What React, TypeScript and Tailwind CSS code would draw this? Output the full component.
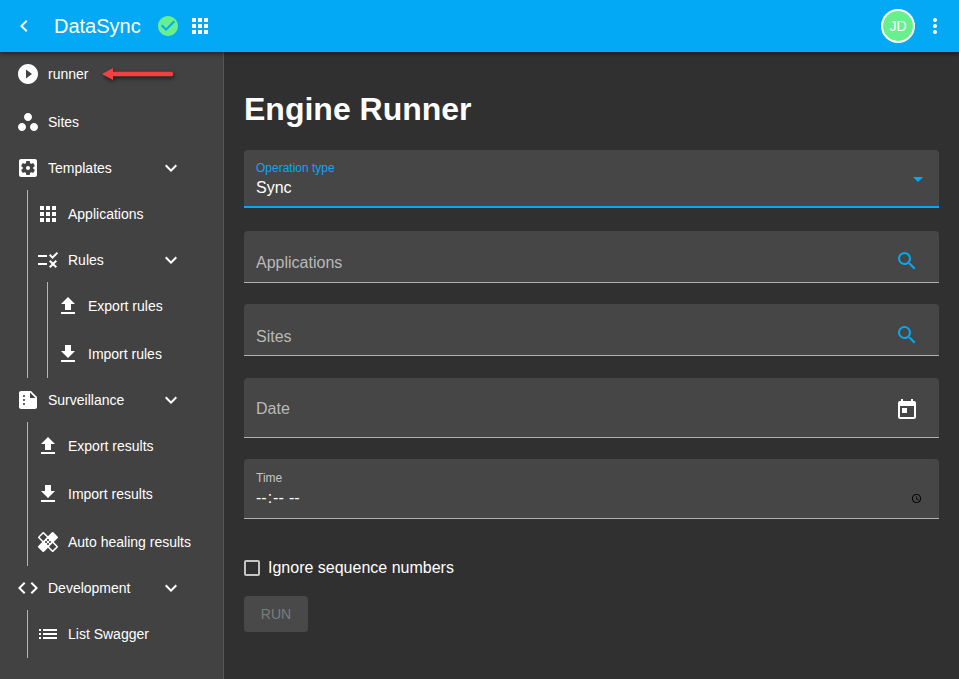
import type { ReactNode } from "react"
import {
  MdApps,
  MdArrowDropDown,
  MdCheckCircle,
  MdChevronLeft,
  MdCode,
  MdExpandMore,
  MdFileDownload,
  MdFileUpload,
  MdHealing,
  MdList,
  MdMoreVert,
  MdPlayCircleFilled,
  MdRule,
  MdSearch,
  MdSettingsApplications,
  MdSummarize,
  MdToday,
  MdWorkspaces,
} from "react-icons/md"

function NavItem({ icon, label, children }: { icon: ReactNode; label: string; children?: ReactNode }) {
  return (
    <div className="flex h-12 items-center pl-4 text-sm text-white">
      <span className="flex w-6 justify-center text-2xl">{icon}</span>
      <span className="ml-2 whitespace-nowrap">{label}</span>
      {children}
    </div>
  )
}

function NavGroup({ icon, label, children }: { icon: ReactNode; label: string; children: ReactNode }) {
  return (
    <div>
      <div className="flex h-11 items-center pl-4 text-sm text-white">
        <span className="flex w-6 justify-center text-2xl">{icon}</span>
        <span className="ml-2 whitespace-nowrap">{label}</span>
        <MdExpandMore className="ml-auto mr-10 text-2xl" />
      </div>
      <div className="ml-[27px] border-l border-[#b5b5b5] [&>*]:-ml-2">{children}</div>
    </div>
  )
}

function SearchField({ label, textClass, iconClass }: { label: string; textClass: string; iconClass: string }) {
  return (
    <div className="flex h-[52px] items-end justify-between rounded-t border-b border-[#b0b0b0] bg-[#464646] pb-[9px] pl-3 pr-5">
      <span className={"text-base leading-6 text-[#b9b9b9] " + textClass}>{label}</span>
      <MdSearch className={"text-2xl text-[#03a9f4] " + iconClass} />
    </div>
  )
}

export default function App() {
  return (
    <div className="flex h-[679px] flex-col overflow-hidden bg-[#303030] font-['Liberation_Sans',Arial,sans-serif]">
      {/* Top bar */}
      <header className="relative z-10 flex h-[52px] shrink-0 items-center bg-[#03a9f4] pl-3 pr-3 text-white shadow-[0_2px_4px_rgba(0,0,0,0.45)]">
        <MdChevronLeft className="text-2xl" />
        <span className="ml-[18px] text-xl">DataSync</span>
        <MdCheckCircle className="ml-[15px] text-2xl text-[#69f08e]" />
        <MdApps className="ml-2 text-2xl" />
        <div className="ml-auto flex h-[34px] w-[34px] items-center justify-center rounded-full border-2 border-white bg-[#69f08e] text-sm text-white">
          JD
        </div>
        <MdMoreVert className="ml-2 text-2xl" />
      </header>

      <div className="flex min-h-0 flex-1">
        {/* Sidebar */}
        <nav className="w-[224px] shrink-0 border-r border-[#565656] bg-[#424242]">
          <div className="mb-[2px] flex h-11 items-center pl-4 text-sm text-white">
            <MdPlayCircleFilled className="text-2xl" />
            <span className="ml-2">runner</span>
            <svg className="ml-[14px] drop-shadow-[1px_2px_2px_rgba(0,0,0,0.6)]" width="73" height="12" viewBox="0 0 73 12">
              <path d="M0 6 L11 0 V3.7 H70 Q72.5 6 70 8.3 H11 V12 Z" fill="#f44043" />
            </svg>
          </div>
          <NavItem icon={<MdWorkspaces />} label="Sites" />
          <NavGroup icon={<MdSettingsApplications />} label="Templates">
            <NavItem icon={<MdApps />} label="Applications" />
            <NavGroup icon={<MdRule />} label="Rules">
              <NavItem icon={<MdFileUpload />} label="Export rules" />
              <NavItem icon={<MdFileDownload />} label="Import rules" />
            </NavGroup>
          </NavGroup>
          <NavGroup icon={<MdSummarize />} label="Surveillance">
            <NavItem icon={<MdFileUpload />} label="Export results" />
            <NavItem icon={<MdFileDownload />} label="Import results" />
            <NavItem icon={<MdHealing />} label="Auto healing results" />
          </NavGroup>
          <NavGroup icon={<MdCode />} label="Development">
            <NavItem icon={<MdList />} label="List Swagger" />
          </NavGroup>
        </nav>

        {/* Main */}
        <main className="min-w-0 flex-1 px-5 pt-[37px]">
          <h1 className="mb-[21px] text-[32px] font-bold leading-10 text-white">Engine Runner</h1>

          <div className="flex h-[58px] items-center justify-between rounded-t border-b-2 border-[#03a9f4] bg-[#464646] pl-3 pr-[9px] pt-[2px]">
            <div>
              <div className="text-xs leading-[14px] text-[#03a9f4]">Operation type</div>
              <div className="mt-[3px] text-base leading-5 text-white">Sync</div>
            </div>
            <MdArrowDropDown className="text-2xl text-[#03a9f4]" />
          </div>

          <div className="mt-[23px]">
            <SearchField label="Applications" textClass="-mb-[2px]" iconClass="" />
          </div>
          <div className="mt-[21px]">
            <SearchField label="Sites" textClass="-mb-[3px]" iconClass="-mb-[1px]" />
          </div>

          <div className="mt-[22px] flex h-[60px] items-center justify-between rounded-t border-b border-[#b0b0b0] bg-[#464646] pl-3 pr-5 pt-[2px]">
            <span className="text-base text-[#b9b9b9]">Date</span>
            <MdToday className="mt-[2px] text-2xl text-white" />
          </div>

          <div className="mt-[21px] h-[60px] rounded-t border-b border-[#b0b0b0] bg-[#464646] pl-3 pr-4 pt-3">
            <div className="text-xs leading-[14px] text-[#c4c4c4]">Time</div>
            <input
              type="time"
              className="-ml-px mt-px h-6 w-full bg-transparent text-base leading-5 text-white outline-none [&::-webkit-calendar-picker-indicator]:h-[11px] [&::-webkit-calendar-picker-indicator]:w-[11px] [&::-webkit-calendar-picker-indicator]:p-0"
            />
          </div>

          <label className="mt-[37px] flex h-6 items-center">
            <input type="checkbox" className="h-4 w-4 appearance-none rounded-[2px] border-2 border-[#c4c4c4]" />
            <span className="ml-2 text-base text-white">Ignore sequence numbers</span>
          </label>

          <button className="mt-4 h-9 w-16 rounded bg-[#494949] text-sm font-medium text-[#7c7c7c]">RUN</button>
        </main>
      </div>
    </div>
  )
}
